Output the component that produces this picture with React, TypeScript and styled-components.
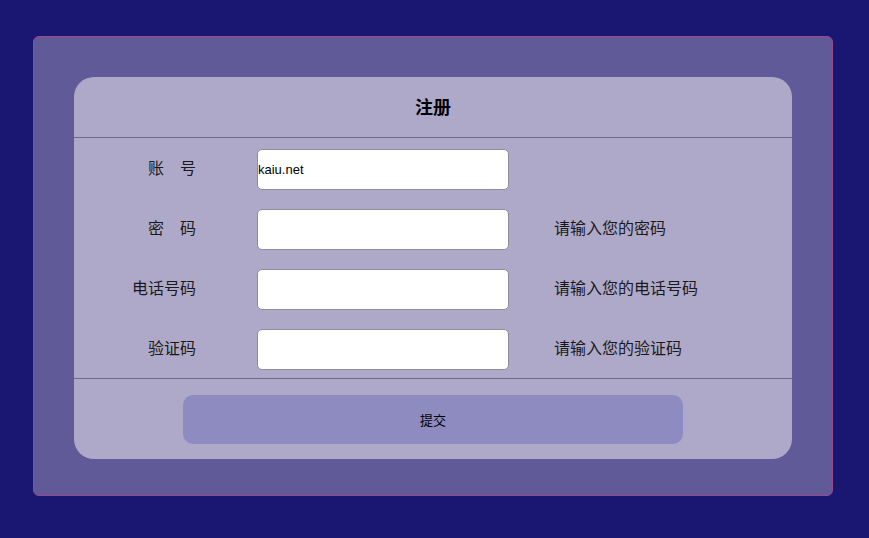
import React from "react";
import styled, { createGlobalStyle } from "styled-components";

const GlobalStyle = createGlobalStyle`
  html, body {
    margin: 0;
    padding: 0;
    background: #1a1773;
  }
  body {
    font-family: "Liberation Sans", "Noto Sans CJK SC", sans-serif;
  }
`;

interface IField {
  label: string;
  value?: string;
  hint?: string;
}

const fields: IField[] = [
  { label: "账　号", value: "kaiu.net" },
  { label: "密　码", hint: "请输入您的密码" },
  { label: "电话号码", hint: "请输入您的电话号码" },
  { label: "验证码", hint: "请输入您的验证码" },
];

export default function App() {
  return (
    <>
      <GlobalStyle />
      <Page>
        <Panel>
          <Card>
            <Header>注册</Header>
            <Body>
              {fields.map((f) => (
                <Row key={f.label}>
                  <Label>{f.label}</Label>
                  <Input type="text" defaultValue={f.value} />
                  <Hint>{f.hint}</Hint>
                </Row>
              ))}
            </Body>
            <Footer>
              <SubmitBtn type="button">提交</SubmitBtn>
            </Footer>
          </Card>
        </Panel>
      </Page>
    </>
  );
}

const Page = styled.div`
  padding: 36px 0 0 33px;
  height: 538px;
  box-sizing: border-box;
`;

const Panel = styled.div`
  width: 800px;
  height: 460px;
  box-sizing: border-box;
  background: #605a98;
  border: 1px solid #9a4a8c;
  border-radius: 6px;
  padding: 40px;
`;

const Card = styled.div`
  width: 718px;
  height: 382px;
  background: #afa9c9;
  border-radius: 20px;
  display: flex;
  flex-direction: column;
`;

const Header = styled.div`
  height: 58px;
  padding-bottom: 2px;
  display: flex;
  align-items: center;
  justify-content: center;
  font-family: "Noto Sans CJK SC", sans-serif;
  font-size: 18px;
  font-weight: bold;
  color: #000;
  border-bottom: 1px solid #6d6888;
`;

const Body = styled.div`
  display: flex;
  flex-direction: column;
  border-bottom: 1px solid #6d6888;
`;

const Row = styled.div`
  height: 60px;
  box-sizing: border-box;
  padding-top: 11px;
  display: grid;
  grid-template-columns: 183px 297px 1fr;
  align-items: start;
`;

const Label = styled.div`
  height: 41px;
  line-height: 37px;
  padding-right: 61px;
  text-align: right;
  font-family: "Noto Sans CJK SC", sans-serif;
  font-size: 16px;
  color: #1a1a1a;
`;

const Input = styled.input`
  width: 252px;
  height: 41px;
  box-sizing: border-box;
  padding: 0;
  border: 1px solid #8f8c9c;
  border-radius: 5px;
  background: #fff;
  font-family: "Liberation Sans", sans-serif;
  font-size: 13px;
  color: #000;

  &:focus {
    outline: none;
  }
`;

const Hint = styled.div`
  height: 41px;
  line-height: 37px;
  font-family: "Noto Sans CJK SC", sans-serif;
  font-size: 16px;
  color: #1a1a1a;
`;

const Footer = styled.div`
  flex: 1;
  display: flex;
  align-items: center;
  justify-content: center;
`;

const SubmitBtn = styled.button`
  width: 500px;
  height: 49px;
  border: none;
  border-radius: 10px;
  background: #8e8bc1;
  font-family: "Noto Sans CJK SC", sans-serif;
  font-size: 13px;
  line-height: 1;
  color: #000;
  cursor: pointer;
`;
